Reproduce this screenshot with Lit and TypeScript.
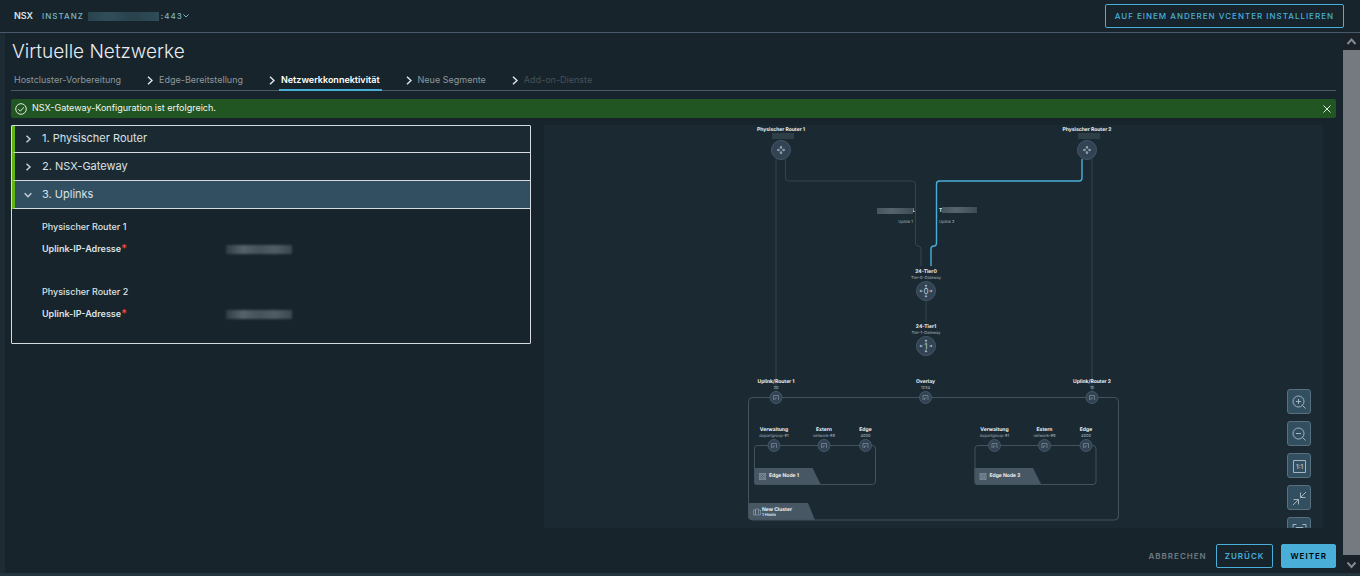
import { LitElement, html, svg, css } from "lit";
import { customElement, state } from "lit/decorators.js";
import { classMap } from "lit/directives/class-map.js";

const base = css`
  * { box-sizing: border-box; }
  button { font: inherit; margin: 0; cursor: pointer; }
`;

@customElement("network-map")
class NetworkMap extends LitElement {
  static styles = [base, css`
    :host { display: block; position: relative; overflow: hidden; background: #1b2a32; min-height: 0; min-width: 0; }
    .map { display: block; width: 100%; height: 100%; font-family: Inter, "Noto Sans", sans-serif; text-rendering: geometricPrecision; }
    .name { font-size: 5px; font-weight: 700; fill: #eef2f5; }
    .sub { font-size: 4px; fill: #a9b7c0; }
    .sub.strong { fill: #e4eaee; font-weight: 600; }
    .mid { text-anchor: middle; }
    .end { text-anchor: end; }
    .line { fill: none; stroke: #34444e; stroke-width: 1; }
    .frame { fill: none; stroke: #43535d; stroke-width: 1; }
    .active { fill: none; stroke: #49afd9; stroke-width: 1.4; }
    .disc { fill: #324453; stroke: #455766; stroke-width: 1; }
    .tab { fill: #485764; }
    .glyph { fill: none; stroke: #a9b9c4; stroke-width: 0.7; }
    .solid { fill: #a9b9c4; }
    .dim { opacity: 0.65; }
    .digit { font-size: 8px; fill: #c3d0d8; text-anchor: middle; }
    .hidden { fill: url(#shade); filter: blur(0.7px); }
    .hidden.faint { fill: #2f3f48; }
    .tools { position: absolute; right: 12px; top: 264px; display: grid; gap: 7px; }
    .tool { width: 24px; height: 25px; padding: 0; display: grid; place-items: center; background: #324f61; border: 1px solid #5b707d; border-radius: 3px; }
    .tool svg { width: 16px; height: 16px; fill: none; stroke: #a3b4bd; }
    .tool text { font: 700 6px Inter, sans-serif; fill: #a3b4bd; stroke: none; text-anchor: middle; }
  `];

  arrows(r: number) {
    return [0, 90, 180, 270].map((a) => svg`
      <g transform="rotate(${a})"><path class="solid" d="M0 ${-r - 1.6}l1.6 1.7h-1.1v1.5h-1v-1.5h-1.1z"></path></g>`);
  }

  router(x: number, name: string) {
    return svg`
      <text class="name mid" x=${x} y="6">${name}</text>
      <rect class="hidden faint" x=${x - 9} y="8" width="22" height="6"></rect>
      <circle class="disc" cx=${x} cy="25" r="9.5"></circle>
      <g transform="translate(${x} 25)">${this.arrows(2.6)}</g>`;
  }

  tier(y: number, n: string) {
    return svg`
      <text class="name mid" x="382" y=${y - 18}>24-Tier${n}</text>
      <text class="sub mid" x="382" y=${y - 12}>Tier-${n}-Gateway</text>
      <circle class="disc" cx="382" cy=${y} r="9.5"></circle>
      <g transform="translate(382 ${y})">${this.arrows(5)}</g>
      <text class="digit" x="382" y=${y + 3}>${n}</text>`;
  }

  port(x: number, y: number, name: string, sub: string) {
    return svg`
      <text class="name mid" x=${x} y=${y - 14.5}>${name}</text>
      <text class="sub mid" x=${x} y=${y - 8.5}>${sub}</text>
      <circle class="disc" cx=${x} cy=${y} r="6"></circle>
      <g class="dim" transform="translate(${x} ${y})">
        <path class="glyph" d="M-2.500 2.500V-2H2.500V2.500M-1 2.500V.5H1"></path>
      </g>`;
  }

  edge(x: number, name: string) {
    return svg`
      <path class="tab" d="M${x} 343h58.500l8.500 17h-64q-3 0-3-3z"></path>
      <rect class="frame" x=${x + 0.5} y="320.500" width="121" height="39" rx="3"></rect>
      <path class="glyph dim" d="M${x + 5.5} 348.500h6v6h-6zm0 0l6 6m-6 0l6-6m-5 3a2 2 0 0 0 4 0a2 2 0 0 0-4 0"></path>
      <text class="name" x=${x + 15} y="352">${name}</text>
      ${this.port(x + 20, 320.5, "Verwaltung", "dvportgroup-81")}
      ${this.port(x + 70, 320.5, "Extern", "network-89")}
      ${this.port(x + 111.5, 320.5, "Edge", "4000")}`;
  }

  render() {
    return html`
      <svg class="map" viewBox="0 0 779 403" role="img" aria-label="Topologie">
        <defs>
          <linearGradient id="shade">
            <stop offset="0" stop-color="#45555e"></stop>
            <stop offset="0.400" stop-color="#55646d"></stop>
            <stop offset="1" stop-color="#3d4c55"></stop>
          </linearGradient>
        </defs>
        <path class="line" d="M232 34V266M548 34V266M382 176V197"></path>
        <path class="line" d="M241.500 34V53q0 3 3 3H368.500q3 0 3 3V118q0 3 2.500 3q3 0 3 3V141"></path>
        <path class="active" d="M538 34V53q0 3-3 3H395.500q-3 0-3 3V118q0 3-2.500 3q-3 0-3 3V141"></path>
        ${this.router(237, "Physischer Router 1")}
        ${this.router(543, "Physischer Router 2")}
        <text class="name end" x="371" y="87">L</text>
        <rect class="hidden" x="333" y="83" width="36" height="6"></rect>
        <text class="sub end" x="369" y="98">Uplink 1</text>
        <text class="name" x="395" y="87">T</text>
        <rect class="hidden" x="398" y="82" width="35" height="6"></rect>
        <text class="sub" x="395" y="98">Uplink 2</text>
        ${this.tier(166, "0")}
        ${this.tier(221, "1")}
        <path class="tab" d="M204 378h60l7 17h-63q-4 0-4-4z"></path>
        <rect class="frame" x="204.500" y="272.500" width="370" height="122.500" rx="4"></rect>
        <path class="glyph dim" d="M211.500 385v5h-2v-5zm0-1h3v6h-3zm3 1h2v5h-2"></path>
        <text class="name" x="218" y="386">New Cluster</text>
        <text class="sub strong" x="218" y="391">1 Hosts</text>
        ${this.port(232, 272.5, "Uplink/Router 1", "20")}
        ${this.port(381.5, 272.5, "Overlay", "1234")}
        ${this.port(548, 272.5, "Uplink/Router 2", "10")}
        ${this.edge(210, "Edge Node 1")}
        ${this.edge(430.5, "Edge Node 2")}
      </svg>
      <div class="tools">
        <button class="tool" aria-label="Vergrößern"><svg viewBox="0 0 16 16"><circle cx="7.500" cy="7.500" r="5.500"></circle><path d="M11.500 11.500l3 3M7.500 5v5M5 7.500h5"></path></svg></button>
        <button class="tool" aria-label="Verkleinern"><svg viewBox="0 0 16 16"><circle cx="7.500" cy="7.500" r="5.500"></circle><path d="M11.500 11.500l3 3M5 7.500h5"></path></svg></button>
        <button class="tool" aria-label="Originalgröße"><svg viewBox="0 0 16 16"><path d="M2.500 2.500h12v12h-12z"></path><text x="8.500" y="11">1:1</text></svg></button>
        <button class="tool" aria-label="Einpassen"><svg viewBox="0 0 16 16"><path d="M15 2L9.500 7.500M9.500 2.500v5h5M2 15l5.500-5.500M2.500 9.500h5v5"></path></svg></button>
        <button class="tool" aria-label="Vollbild"><svg viewBox="0 0 16 16"><path d="M2 5.500v-3h3.500M11.500 2.500h3.500v3M2 11v3h3.500M15 11v3h-3.500M5 5.500h7v6H5z"></path></svg></button>
      </div>`;
  }
}

@customElement("app-root")
class AppRoot extends LitElement {
  static styles = [base, css`
    :host { display: flex; flex-direction: column; height: 100vh; overflow: hidden; background: #17242b; color: #dbe2e6; font: 9px/12px Inter, "Noto Sans", sans-serif; }
    .top { display: flex; align-items: center; flex: none; height: 33px; padding: 0 16px 0 14px; border-bottom: 1px solid #485969; }
    .brand { font-weight: 600; margin-right: 9px; }
    .instance { display: flex; align-items: center; padding: 0; border: 0; background: none; color: #79b5c9; font-size: 8px; font-weight: 500; letter-spacing: 1px; }
    .instance .mask { margin: 0 2px 0 4px; width: 71px; height: 9px; background: linear-gradient(90deg, #2a434d, #304e5a 30%, #29424c 60%, #2f4c58); }
    .instance svg { width: 6px; height: 6px; fill: none; stroke: currentColor; }
    .btn { height: 24px; padding: 0 8px; border: 1px solid #49afd9; border-radius: 2px; background: none; color: #49afd9; font-size: 8px; letter-spacing: 1px; font-weight: 600; text-transform: uppercase; }
    .top .btn { margin-left: auto; padding: 0 9px; font-weight: 500; }
    .btn.primary { background: #49afd9; color: #000; }
    .btn.flat { border-color: transparent; color: #6f7b82; }
    .frame { flex: 1; min-height: 0; display: flex; }
    .rail { flex: none; width: 5px; background: #1c2b34; }
    .page { flex: 1; min-width: 0; display: flex; flex-direction: column; padding: 7px 7px 5px 6px; }
    h1 { margin: 0 1px; font-size: 19px; line-height: 24px; font-weight: 300; color: #eaedf0; }
    .steps { display: flex; gap: 24px; height: 27px; margin: 0; padding-left: 1px; border-bottom: 1px solid #485969; list-style: none; }
    .step { display: flex; align-items: center; height: 27px; padding-top: 5px; }
    .step svg { width: 6px; height: 9px; margin-right: 4px; fill: none; stroke: #dfe4e8; stroke-width: 1.500; }
    .step a { height: 22px; line-height: 22px; padding: 0 2px; color: #8d989e; text-decoration: none; }
    .step a.on { color: #fff; font-weight: 600; box-shadow: inset 0 -2px #49afd9; }
    .step a.off { color: #44525a; }
    .alert { flex: none; display: flex; align-items: center; height: 19px; margin-top: 8px; padding: 0 4px 0 4px; border-radius: 2px; background: #215521; color: #f2f5f2; }
    .alert svg { width: 12px; height: 12px; fill: none; stroke: #dfe9df; }
    .alert span { margin-left: 5px; padding-bottom: 1px; }
    .alert button { display: grid; margin-left: auto; padding: 0; border: 0; background: none; }
    .alert button svg { width: 10px; height: 10px; }
    .columns { flex: 1; min-height: 0; display: flex; align-items: flex-start; gap: 13px; margin-top: 7px; }
    .wizard { flex: 0 0 520px; border: 1px solid #d6dbdf; border-radius: 1px; }
    .head { display: flex; align-items: center; width: 100%; height: 28px; padding: 0 11px 0 9px; border: 0; border-left: 3px solid #60b515; border-bottom: 1px solid #d6dbdf; background: #1b2a32; color: #dbe2e6; font-size: 11px; text-align: left; }
    .head.first { height: 27px; }
    .head.open { background: #324f61; }
    .head span { padding-bottom: 2px; }
    .head svg { width: 8px; height: 8px; margin-right: 10px; fill: none; stroke: #c5ced4; stroke-width: 1.500; }
    .fields { display: grid; grid-template-columns: 184px 1fr; row-gap: 10px; align-items: center; padding: 12px 30px 23px; }
    .group { grid-column: 1 / -1; margin: 0; font-size: 9px; font-weight: 500; }
    .group.next { margin-top: 21px; }
    label { font-weight: 600; }
    label b { color: #f54f47; font-size: 11px; font-weight: 500; line-height: 8px; }
    .value { width: 66px; height: 9px; background: linear-gradient(90deg, #2f3c43, #56626a 25%, #465259 50%, #515d64 75%, #3a474e); filter: blur(1px); }
    network-map { flex: 1; align-self: stretch; margin-right: 13px; }
    .foot { display: flex; flex: none; justify-content: flex-end; gap: 8px; padding-top: 16px; }
    .foot .flat { margin-right: -8px; }
    .scroll { flex: none; display: flex; flex-direction: column; width: 17px; background: #747a80; color: #7b8187; }
    .scroll button { display: grid; place-items: center; width: 17px; height: 17px; padding: 0; border: 0; background: #1a2129; }
    .scroll .down { height: 18px; margin-top: auto; }
    .scroll svg { width: 11px; height: 11px; fill: none; stroke: #838990; stroke-width: 2; }
    .base { flex: none; height: 3px; background: #24353f; }
  `];

  @state() private open = 2;

  private sections = ["Physischer Router", "NSX-Gateway", "Uplinks"];
  private steps = [
    ["Hostcluster-Vorbereitung", ""],
    ["Edge-Bereitstellung", ""],
    ["Netzwerkkonnektivität", "on"],
    ["Neue Segmente", ""],
    ["Add-on-Dienste", "off"],
  ];

  render() {
    return html`
      <header class="top">
        <span class="brand">NSX</span>
        <button class="instance">INSTANZ<span class="mask"></span>:443<svg viewBox="0 0 6 6"><path d="M.5 1.500L3 4l2.500-2.500"></path></svg></button>
        <button class="btn">Auf einem anderen vCenter installieren</button>
      </header>
      <div class="frame">
        <div class="rail"></div>
        <main class="page">
          <h1>Virtuelle Netzwerke</h1>
          <ol class="steps">
            ${this.steps.map(([name, mode], i) => html`
              <li class="step">
                ${i ? html`<svg viewBox="0 0 6 9"><path d="M1 .7L5 4.500 1 8.300"></path></svg>` : ""}
                <a href="#" class=${mode}>${name}</a>
              </li>`)}
          </ol>
          <div class="alert" role="status">
            <svg viewBox="0 0 12 12"><circle cx="6" cy="6" r="5.300"></circle><path d="M3.300 6.200l2 2L8.900 4.200"></path></svg>
            <span>NSX-Gateway-Konfiguration ist erfolgreich.</span>
            <button aria-label="Schließen"><svg viewBox="0 0 10 10"><path d="M1.500 1.500l7 7M8.500 1.500l-7 7"></path></svg></button>
          </div>
          <div class="columns">
            <section class="wizard">
              ${this.sections.map((name, i) => html`
                <button class=${classMap({ head: true, first: i === 0, open: this.open === i })}
                  aria-expanded=${this.open === i} @click=${() => (this.open = i)}>
                  <svg viewBox="0 0 8 8"><path d=${this.open === i ? "M.7 2.300L4 5.700l3.300-3.400" : "M2.500 .7L6 4 2.500 7.300"}></path></svg>
                  <span>${i + 1}. ${name}</span>
                </button>`)}
              <div class="fields">
                <h2 class="group">Physischer Router 1</h2>
                <label for="ip1">Uplink-IP-Adresse<b>*</b></label><output class="value" id="ip1"></output>
                <h2 class="group next">Physischer Router 2</h2>
                <label for="ip2">Uplink-IP-Adresse<b>*</b></label><output class="value" id="ip2"></output>
              </div>
            </section>
            <network-map></network-map>
          </div>
          <footer class="foot">
            <button class="btn flat">Abbrechen</button>
            <button class="btn">Zurück</button>
            <button class="btn primary">Weiter</button>
          </footer>
        </main>
        <div class="scroll">
          <button aria-label="Nach oben"><svg viewBox="0 0 11 11"><path d="M1.500 8l4-4.500 4 4.500"></path></svg></button>
          <button class="down" aria-label="Nach unten"><svg viewBox="0 0 11 11"><path d="M1.500 3.500l4 4.500 4-4.500"></path></svg></button>
        </div>
      </div>
      <div class="base"></div>`;
  }
}
